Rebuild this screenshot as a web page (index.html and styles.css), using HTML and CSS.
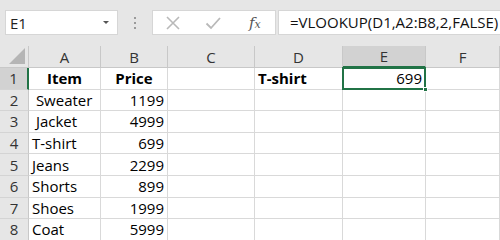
FILE: index.html
```
<!DOCTYPE html>
<html>
<head>
<meta charset="utf-8">
<link rel="stylesheet" href="styles.css">
</head>
<body>
<div class="toolbar">
  <div class="namebox"><span class="ref">E1</span><span class="caret"></span></div>
  <div class="grip"><i></i><i></i><i></i></div>
  <div class="fxbox">
    <svg class="ico" width="16" height="16" viewBox="0 0 16 16"><path d="M2 2 L14 14 M14 2 L2 14" stroke="#b9b9b9" stroke-width="1.6" fill="none"/></svg>
    <svg class="ico" width="16" height="16" viewBox="0 0 16 16"><path d="M1.5 8.5 L6 13 L15 3" stroke="#b9b9b9" stroke-width="1.8" fill="none"/></svg>
    <span class="fx">f<sub>x</sub></span>
  </div>
  <div class="formula">=VLOOKUP(D1,A2:B8,2,FALSE)</div>
</div>
<div class="sheet">
  <div class="corner"><span class="tri"></span></div>
  <div class="ch">A</div><div class="ch">B</div><div class="ch">C</div><div class="ch">D</div><div class="ch sel">E</div><div class="ch">F</div>

  <div class="rh sel">1</div>
  <div class="c ctr b">Item</div><div class="c ctr b">Price</div><div class="c"></div><div class="c b">T-shirt</div><div class="c r active">699<span class="handle"></span></div><div class="c"></div>

  <div class="rh">2</div>
  <div class="c">&nbsp;Sweater</div><div class="c r">1199</div><div class="c"></div><div class="c"></div><div class="c"></div><div class="c"></div>

  <div class="rh">3</div>
  <div class="c">&nbsp;Jacket</div><div class="c r">4999</div><div class="c"></div><div class="c"></div><div class="c"></div><div class="c"></div>

  <div class="rh">4</div>
  <div class="c">T-shirt</div><div class="c r">699</div><div class="c"></div><div class="c"></div><div class="c"></div><div class="c"></div>

  <div class="rh">5</div>
  <div class="c">Jeans</div><div class="c r">2299</div><div class="c"></div><div class="c"></div><div class="c"></div><div class="c"></div>

  <div class="rh">6</div>
  <div class="c">Shorts</div><div class="c r">899</div><div class="c"></div><div class="c"></div><div class="c"></div><div class="c"></div>

  <div class="rh">7</div>
  <div class="c">Shoes</div><div class="c r">1999</div><div class="c"></div><div class="c"></div><div class="c"></div><div class="c"></div>

  <div class="rh">8</div>
  <div class="c">Coat</div><div class="c r">5999</div><div class="c"></div><div class="c"></div><div class="c"></div><div class="c"></div>
</div>
</body>
</html>
```
FILE: styles.css
```
* { box-sizing: border-box; }
html, body { margin: 0; padding: 0; }
body {
  width: 500px;
  height: 240px;
  overflow: hidden;
  background: #ffffff;
  font-family: "Open Sans", "Liberation Sans", sans-serif;
  font-size: 14px;
  color: #000;
}
.toolbar {
  height: 46px;
  background: #e6e6e6;
  display: flex;
  align-items: flex-start;
  padding: 10px 0 0 5px;
}
.namebox {
  width: 113px;
  height: 25px;
  background: #fff;
  border: 1px solid #d6d6d6;
  display: flex;
  align-items: center;
  justify-content: space-between;
  padding: 0 8px 0 4px;
  font-size: 15px;
  color: #222;
}
.caret {
  width: 0; height: 0;
  border-left: 3px solid transparent;
  border-right: 3px solid transparent;
  border-top: 3px solid #555;
}
.grip {
  width: 34px;
  height: 25px;
  display: flex;
  flex-direction: column;
  align-items: center;
  justify-content: center;
  gap: 3px;
}
.grip i {
  width: 2px; height: 2px;
  background: #9a9a9a;
  display: block;
}
.fxbox {
  width: 124px;
  height: 25px;
  background: #fff;
  border: 1px solid #d6d6d6;
  display: flex;
  align-items: center;
  padding-left: 12px;
  gap: 24px;
}
.ico { display: block; }
.fx {
  font-family: "DejaVu Serif", "Liberation Serif", serif;
  font-style: italic;
  font-size: 15px;
  color: #555;
  margin-left: 4px;
}
.fx sub { font-size: 11px; vertical-align: 0; }
.formula {
  flex: 1;
  height: 25px;
  margin-left: 2px;
  background: #fff;
  border: 1px solid #d6d6d6;
  border-right: none;
  padding-left: 11px;
  font-size: 15px;
  line-height: 23px;
  color: #111;
  white-space: nowrap;
}
.sheet {
  display: grid;
  grid-template-columns: 29px 72px 67px 87px 88px 83px 74px;
  grid-template-rows: 22px repeat(8, 21.6px);
}
.corner {
  background: #e6e6e6;
  border-right: 1px solid #c8c8c8;
  border-bottom: 1px solid #c8c8c8;
  position: relative;
}
.tri {
  position: absolute;
  right: 3px;
  bottom: 3px;
  width: 0; height: 0;
  border-left: 16px solid transparent;
  border-bottom: 16px solid #b5b5b5;
}
.ch {
  background: #e6e6e6;
  border-right: 1px solid #c8c8c8;
  border-bottom: 1px solid #c8c8c8;
  color: #333;
  font-size: 15px;
  display: flex;
  align-items: center;
  justify-content: center;
}
.ch.sel {
  background: #d2d2d2;
  border-bottom: 2px solid #217346;
}
.rh {
  background: #e6e6e6;
  border-right: 1px solid #c8c8c8;
  border-bottom: 1px solid #d4d4d4;
  color: #333;
  font-size: 15px;
  display: flex;
  align-items: center;
  justify-content: center;
}
.rh.sel {
  background: #d2d2d2;
  border-right: 2px solid #217346;
}
.c {
  border-right: 1px solid #d9d9d9;
  border-bottom: 1px solid #d9d9d9;
  display: flex;
  align-items: center;
  padding: 0 3px;
  white-space: pre;
  font-size: 15px;
}
.c.ctr { justify-content: center; }
.c.r { justify-content: flex-end; }
.c.b { font-weight: 700; }
.c.active {
  position: relative;
}
.c.active::after {
  content: "";
  position: absolute;
  left: -1px; top: -1px; right: -1px; bottom: -1px;
  border: 2px solid #217346;
}
.handle {
  position: absolute;
  right: -3px;
  bottom: -3px;
  width: 5px;
  height: 5px;
  background: #217346;
  border: 1px solid #fff;
  z-index: 2;
}
```
